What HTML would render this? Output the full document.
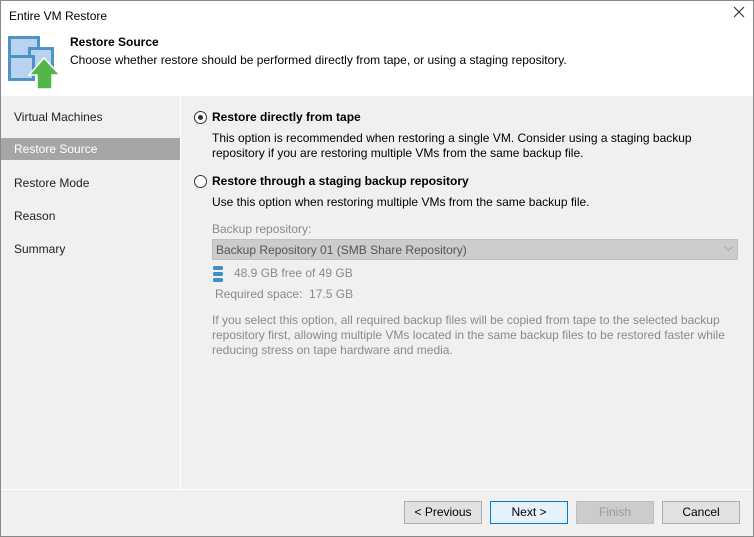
<!DOCTYPE html>
<html><head><meta charset="utf-8"><style>
*{margin:0;padding:0;box-sizing:border-box}
body{width:754px;height:537px;overflow:hidden;font-family:"Liberation Sans",sans-serif;font-size:12px;color:#000;background:#f0f0f0}
.win{position:absolute;left:0;top:0;width:754px;height:537px;background:#f0f0f0}
.frame{position:absolute;left:0;top:0;width:754px;height:537px;border:1px solid #888;pointer-events:none}
.abs{position:absolute;white-space:nowrap}
.hdr{position:absolute;left:0;top:0;width:754px;height:96px;background:#fff}
.nav div{position:absolute;left:0;width:180px;height:22px;padding-left:14px;line-height:22px;color:#222}
.btn{position:absolute;top:501px;width:78px;height:23px;border:1px solid #adadad;background:#e1e1e1;text-align:center;line-height:21px}
.radio{position:absolute;width:13px;height:13px;border:1px solid #333;border-radius:50%;background:#fff}
.g{color:#8a8a8a}
</style></head><body><div class="win">
<div class="hdr"></div>
<div class="abs" style="left:9px;top:9px">Entire VM Restore</div>
<svg class="abs" style="left:733px;top:6px" width="12" height="12"><path d="M1 1L11 11M11 1L1 11" stroke="#333" stroke-width="1.2"/></svg>
<svg class="abs" style="left:0;top:0" width="70" height="95">
<rect x="9.5" y="37.5" width="29" height="29" fill="#b7d3ef" stroke="#4f93c6" stroke-width="3"/>
<rect x="29.5" y="48.5" width="23" height="25" fill="#b7d3ef" stroke="#4f93c6" stroke-width="3"/>
<rect x="9.5" y="56.5" width="24" height="23" fill="#b7d3ef" stroke="#4f93c6" stroke-width="3"/>
<path d="M44 58 L60 75 L52 75 L52 89 L37 89 L37 75 L29 75 Z" fill="#52b748" stroke="#fff" stroke-width="1.5"/>
</svg>
<div class="abs" style="left:70px;top:35px;font-weight:bold">Restore Source</div>
<div class="abs" style="left:70px;top:53px">Choose whether restore should be performed directly from tape, or using a staging repository.</div>
<div style="position:absolute;left:180px;top:96px;width:1px;height:393px;background:#fff"></div>
<div style="position:absolute;left:0;top:489px;width:754px;height:1px;background:#fff"></div>
<div class="nav">
<div style="top:106px">Virtual Machines</div>
<div style="top:138px;background:#a6a6a6;color:#fff">Restore Source</div>
<div style="top:172px">Restore Mode</div>
<div style="top:205px">Reason</div>
<div style="top:238px">Summary</div>
</div>
<div class="radio" style="left:194px;top:111px"><div style="position:absolute;left:3px;top:3px;width:5px;height:5px;border-radius:50%;background:#333"></div></div>
<div class="abs" style="left:212px;top:110px;font-weight:bold">Restore directly from tape</div>
<div class="abs" style="left:212px;top:131px;line-height:15px">This option is recommended when restoring a single VM. Consider using a staging backup<br>repository if you are restoring multiple VMs from the same backup file.</div>
<div class="radio" style="left:194px;top:175px"></div>
<div class="abs" style="left:212px;top:174px;font-weight:bold">Restore through a staging backup repository</div>
<div class="abs" style="left:212px;top:195px">Use this option when restoring multiple VMs from the same backup file.</div>
<div class="abs g" style="left:212px;top:222px">Backup repository:</div>
<div style="position:absolute;left:212px;top:239px;width:526px;height:21px;background:#cccccc;border:1px solid #c0c0c0"></div>
<div class="abs" style="left:216px;top:243px;color:#555">Backup Repository 01 (SMB Share Repository)</div>
<svg class="abs" style="left:724px;top:246px" width="9" height="6"><path d="M0.5 0.5L4.5 4.5L8.5 0.5" stroke="#aaa" fill="none"/></svg>
<svg class="abs" style="left:213px;top:266px" width="10" height="16"><rect x="0" y="0" width="10" height="4" rx="1.5" fill="#3f8fc9"/><rect x="0" y="6" width="10" height="4" rx="1.5" fill="#3f8fc9"/><rect x="0" y="12" width="10" height="4" rx="1.5" fill="#3f8fc9"/></svg>
<div class="abs g" style="left:234px;top:266px">48.9 GB free of 49 GB</div>
<div class="abs g" style="left:215px;top:287px">Required space:&nbsp; 17.5 GB</div>
<div class="abs g" style="left:212px;top:313px;line-height:15px">If you select this option, all required backup files will be copied from tape to the selected backup<br>repository first, allowing multiple VMs located in the same backup files to be restored faster while<br>reducing stress on tape hardware and media.</div>
<div class="btn" style="left:404px">&lt; Previous</div>
<div class="btn" style="left:490px;background:#e5f1fb;border-color:#0078d7">Next &gt;</div>
<div class="btn" style="left:576px;background:#cccccc;border-color:#bfbfbf;color:#9a9a9a">Finish</div>
<div class="btn" style="left:662px">Cancel</div>
</div><div class="frame"></div></body></html>
